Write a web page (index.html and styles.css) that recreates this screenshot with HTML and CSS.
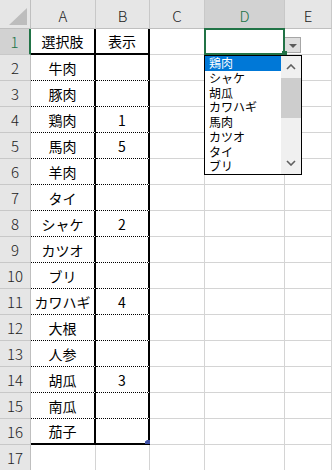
FILE: index.html
```html
<!DOCTYPE html>
<html lang="ja">
<head>
    <meta charset="UTF-8">
    <title>Sheet1</title>
    <link rel="stylesheet" href="styles.css">
</head>
<body>
    <div class="sheet">
        <div class="corner"><span class="corner-mark"></span></div>
        <div class="col-head">A</div>
        <div class="col-head">B</div>
        <div class="col-head">C</div>
        <div class="col-head sel">D</div>
        <div class="col-head">E</div>

        <div class="row-head sel">1</div>
        <div class="cell t a top">選択肢</div>
        <div class="cell t b top">表示</div>
        <div class="cell"></div>
        <div class="cell active">
            <span class="fill-handle"></span>
            <button class="dd-button"><span class="dd-arrow"></span></button>
            <div class="dd-list">
                <ul class="dd-items">
                    <li class="hl">鶏肉</li>
                    <li>シャケ</li>
                    <li>胡瓜</li>
                    <li>カワハギ</li>
                    <li>馬肉</li>
                    <li>カツオ</li>
                    <li>タイ</li>
                    <li>ブリ</li>
                </ul>
                <div class="scrollbar">
                    <div class="sb-btn">
                        <svg width="10" height="6" viewBox="0 0 10 6"><polyline points="1,5 5,1 9,5" fill="none" stroke="#5f5f5f" stroke-width="1.6"/></svg>
                    </div>
                    <div class="sb-thumb"></div>
                    <div class="sb-track"></div>
                    <div class="sb-btn">
                        <svg width="10" height="6" viewBox="0 0 10 6"><polyline points="1,1 5,5 9,1" fill="none" stroke="#5f5f5f" stroke-width="1.6"/></svg>
                    </div>
                </div>
            </div>
        </div>
        <div class="cell"></div>

        <div class="row-head">2</div>
        <div class="cell t a">牛肉</div>
        <div class="cell t b"></div>
        <div class="cell"></div><div class="cell"></div><div class="cell"></div>

        <div class="row-head">3</div>
        <div class="cell t a">豚肉</div>
        <div class="cell t b"></div>
        <div class="cell"></div><div class="cell"></div><div class="cell"></div>

        <div class="row-head">4</div>
        <div class="cell t a">鶏肉</div>
        <div class="cell t b">1</div>
        <div class="cell"></div><div class="cell"></div><div class="cell"></div>

        <div class="row-head">5</div>
        <div class="cell t a">馬肉</div>
        <div class="cell t b">5</div>
        <div class="cell"></div><div class="cell"></div><div class="cell"></div>

        <div class="row-head">6</div>
        <div class="cell t a">羊肉</div>
        <div class="cell t b"></div>
        <div class="cell"></div><div class="cell"></div><div class="cell"></div>

        <div class="row-head">7</div>
        <div class="cell t a">タイ</div>
        <div class="cell t b"></div>
        <div class="cell"></div><div class="cell"></div><div class="cell"></div>

        <div class="row-head">8</div>
        <div class="cell t a">シャケ</div>
        <div class="cell t b">2</div>
        <div class="cell"></div><div class="cell"></div><div class="cell"></div>

        <div class="row-head">9</div>
        <div class="cell t a">カツオ</div>
        <div class="cell t b"></div>
        <div class="cell"></div><div class="cell"></div><div class="cell"></div>

        <div class="row-head">10</div>
        <div class="cell t a">ブリ</div>
        <div class="cell t b"></div>
        <div class="cell"></div><div class="cell"></div><div class="cell"></div>

        <div class="row-head">11</div>
        <div class="cell t a">カワハギ</div>
        <div class="cell t b">4</div>
        <div class="cell"></div><div class="cell"></div><div class="cell"></div>

        <div class="row-head">12</div>
        <div class="cell t a">大根</div>
        <div class="cell t b"></div>
        <div class="cell"></div><div class="cell"></div><div class="cell"></div>

        <div class="row-head">13</div>
        <div class="cell t a">人参</div>
        <div class="cell t b"></div>
        <div class="cell"></div><div class="cell"></div><div class="cell"></div>

        <div class="row-head">14</div>
        <div class="cell t a">胡瓜</div>
        <div class="cell t b">3</div>
        <div class="cell"></div><div class="cell"></div><div class="cell"></div>

        <div class="row-head">15</div>
        <div class="cell t a">南瓜</div>
        <div class="cell t b"></div>
        <div class="cell"></div><div class="cell"></div><div class="cell"></div>

        <div class="row-head">16</div>
        <div class="cell t a last">茄子</div>
        <div class="cell t b last"><span class="table-handle"></span></div>
        <div class="cell"></div><div class="cell"></div><div class="cell"></div>

        <div class="row-head">17</div>
        <div class="cell"></div><div class="cell"></div><div class="cell"></div><div class="cell"></div><div class="cell"></div>
    </div>
</body>
</html>
```

FILE: styles.css
```css
body {
    margin: 0;
    padding: 0;
    width: 332px;
    height: 470px;
    overflow: hidden;
    background: #ffffff;
    font-family: "Noto Sans CJK JP", "Noto Sans", sans-serif;
    color: #000;
}

.sheet {
    display: grid;
    grid-template-columns: 31px 65px 54px 55px 80px 1fr;
    grid-template-rows: 29px;
    grid-auto-rows: 26px;
}

.corner,
.col-head,
.row-head,
.cell {
    box-sizing: border-box;
    display: flex;
    justify-content: center;
    align-items: center;
}

.corner {
    position: relative;
    background: #e6e6e6;
    border-right: 1px solid #bfbfbf;
    border-bottom: 1px solid #bfbfbf;
}

.corner-mark {
    position: absolute;
    left: 9px;
    top: 8px;
    width: 18px;
    height: 17px;
    background: #bdbdbd;
    clip-path: polygon(100% 0, 100% 100%, 0 100%);
}

.col-head {
    background: #e6e6e6;
    border-right: 1px solid #c8c8c8;
    border-bottom: 1px solid #bfbfbf;
    font-size: 15px;
    font-weight: 300;
    color: #222;
    padding-top: 2px;
}

.row-head {
    background: #e6e6e6;
    border-right: 1px solid #bfbfbf;
    border-bottom: 1px solid #c8c8c8;
    font-size: 15px;
    font-weight: 300;
    color: #222;
}

.col-head.sel,
.row-head.sel {
    background: #d2d2d2;
    color: #217346;
}

.row-head.sel {
    border-right: 2px solid #217346;
}

.cell {
    position: relative;
    border-right: 1px solid #d4d4d4;
    border-bottom: 1px solid #d4d4d4;
    font-size: 14px;
}

.t {
    border-bottom: 1px dotted #000;
}

.t.a,
.t.b {
    border-right: 2px solid #000;
}

.t.top,
.t.last {
    border-bottom: 2px solid #000;
}

.table-handle {
    position: absolute;
    right: -2px;
    bottom: -1px;
    width: 5px;
    height: 4px;
    background: #3f51a5;
    clip-path: polygon(40% 0, 100% 0, 100% 100%, 0 100%, 0 40%);
}

/* active cell D1 with its validation list */
.active {
    z-index: 2;
}

.active::after {
    content: "";
    position: absolute;
    top: -1px;
    left: -1px;
    right: -1px;
    bottom: -1px;
    border: 2px solid #217346;
    pointer-events: none;
}

.fill-handle {
    position: absolute;
    right: -3px;
    bottom: -2px;
    width: 5px;
    height: 5px;
    background: #217346;
    z-index: 1;
}

.dd-button {
    position: absolute;
    left: 100%;
    top: 8px;
    width: 17px;
    height: 16px;
    margin: 0;
    padding: 0;
    box-sizing: border-box;
    background: #dedede;
    border: 1px solid #a6a6a6;
    display: flex;
    justify-content: center;
    align-items: center;
}

.dd-arrow {
    width: 0;
    height: 0;
    border-left: 4px solid transparent;
    border-right: 4px solid transparent;
    border-top: 4px solid #5a5a5a;
    margin-top: 1px;
}

.dd-list {
    position: absolute;
    left: -1px;
    top: calc(100% + 1px);
    width: 98px;
    height: 120px;
    box-sizing: border-box;
    border: 1px solid #000;
    background: #fff;
    display: flex;
    z-index: 3;
}

.dd-items {
    flex: 1;
    list-style: none;
    margin: 0;
    padding: 0;
    overflow: hidden;
}

.dd-items li {
    height: 14.75px;
    line-height: 14.75px;
    padding-left: 4px;
    font-size: 12px;
    white-space: nowrap;
}

.dd-items li.hl {
    background: #0078d7;
    color: #fff;
}

.scrollbar {
    width: 20px;
    background: #f0f0f0;
    display: flex;
    flex-direction: column;
}

.sb-btn {
    height: 22px;
    display: flex;
    justify-content: center;
    align-items: center;
}

.sb-thumb {
    height: 40px;
    background: #cdcdcd;
}

.sb-track {
    flex: 1;
}
```
